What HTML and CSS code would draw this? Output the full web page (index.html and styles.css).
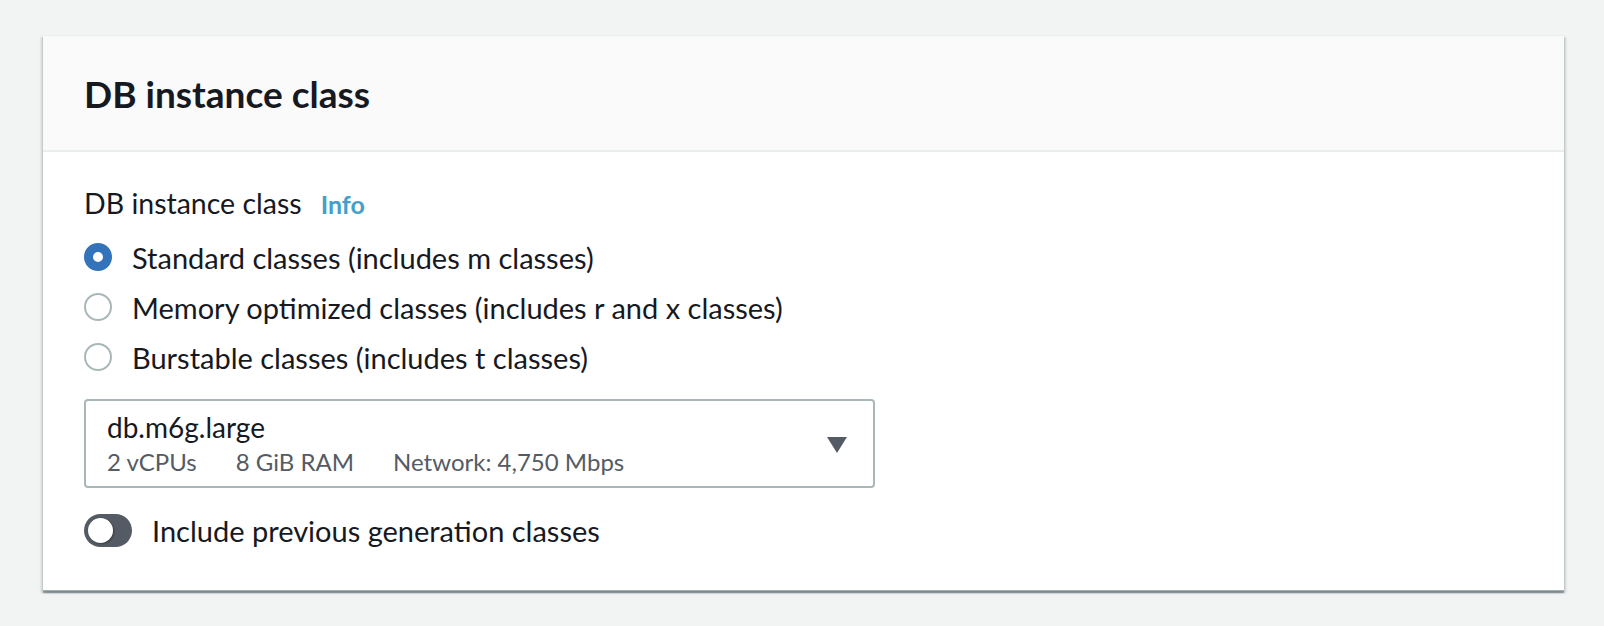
FILE: index.html
```html
<!DOCTYPE html>
<html lang="en">
<head>
<meta charset="utf-8">
<title>DB instance class</title>
<link rel="stylesheet" href="styles.css">
</head>
<body>
<div class="page">
  <section class="card">
    <header class="card-header">
      <h2 class="card-title">DB instance class</h2>
    </header>
    <div class="card-body">
      <div class="field-label">
        <span>DB instance class</span>
        <a class="info" href="#">Info</a>
      </div>
      <div class="radio-group">
        <label class="radio-row">
          <span class="radio checked"></span>
          <span class="radio-text">Standard classes (includes m classes)</span>
        </label>
        <label class="radio-row">
          <span class="radio"></span>
          <span class="radio-text">Memory optimized classes (includes r and x classes)</span>
        </label>
        <label class="radio-row">
          <span class="radio"></span>
          <span class="radio-text">Burstable classes (includes t classes)</span>
        </label>
      </div>
      <div class="select">
        <div class="select-content">
          <div class="select-title">db.m6g.large</div>
          <div class="select-tags">
            <span>2 vCPUs</span>
            <span>8 GiB RAM</span>
            <span>Network: 4,750 Mbps</span>
          </div>
        </div>
        <span class="caret"></span>
      </div>
      <div class="toggle-row">
        <span class="toggle"><span class="knob"></span></span>
        <span class="toggle-text">Include previous generation classes</span>
      </div>
    </div>
  </section>
</div>
</body>
</html>
```
FILE: styles.css
```css
* { box-sizing: border-box; }
html, body {
  margin: 0;
  padding: 0;
  background: #f2f3f3;
}
body {
  font-family: Lato, "Open Sans", Arial, sans-serif;
  color: #16191f;
}
.page {
  padding: 35px 40px 34px 43px;
}
.card {
  background: #ffffff;
  border-top: 1px solid #eaeded;
  border-bottom: 1px solid #a3aeb0;
  box-shadow: 0 2px 1px 0 rgba(0, 28, 36, 0.3), 2px 2px 2px 0 rgba(0, 28, 36, 0.15), -2px 2px 2px 0 rgba(0, 28, 36, 0.15);
}
.card-header {
  background: #fafafa;
  border-bottom: 2px solid #eaeded;
  padding: 36px 41px 34px;
}
.card-title {
  margin: 0;
  font-size: 37px;
  line-height: 44px;
  font-weight: 700;
  color: #16191f;
}
.card-body {
  padding: 31px 41px 43px;
}
.field-label {
  display: flex;
  align-items: baseline;
  gap: 19px;
  font-size: 28.5px;
  line-height: 40px;
}
.info {
  font-size: 25px;
  font-weight: 700;
  color: #44a0cb;
  text-decoration: none;
}
.radio-group {
  margin-top: 8px;
  display: flex;
  flex-direction: column;
}
.radio-row {
  display: flex;
  align-items: center;
  gap: 20px;
  height: 50px;
  font-size: 29px;
}
.radio {
  width: 28px;
  height: 28px;
  border-radius: 50%;
  border: 2px solid #aab7b8;
  background: #fff;
  flex: none;
}
.radio.checked {
  border: 9px solid #3273b9;
}
.select {
  margin-top: 17px;
  width: 791px;
  height: 89px;
  border: 2px solid #aab7b8;
  border-radius: 4px;
  display: flex;
  align-items: center;
  justify-content: space-between;
  padding: 0 26px 0 21px;
}
.select-content {
  display: flex;
  flex-direction: column;
}
.select-title {
  font-size: 28px;
  line-height: 34px;
}
.select-tags {
  display: flex;
  gap: 39px;
  font-size: 24px;
  line-height: 30px;
  color: #545b64;
  margin-top: 3px;
}
.caret {
  width: 0;
  height: 0;
  border-left: 10px solid transparent;
  border-right: 10px solid transparent;
  border-top: 16px solid #545b64;
  margin-top: 2px;
}
.toggle-row {
  margin-top: 26px;
  display: flex;
  align-items: center;
  gap: 20px;
  font-size: 29px;
  height: 33px;
}
.toggle {
  position: relative;
  width: 48px;
  height: 33px;
  border-radius: 17px;
  background: #545b64;
  flex: none;
}
.knob {
  position: absolute;
  left: 4px;
  top: 4px;
  width: 25px;
  height: 25px;
  border-radius: 50%;
  background: #fff;
  box-shadow: 1px 1px 2px rgba(0, 0, 0, 0.35);
}
```
